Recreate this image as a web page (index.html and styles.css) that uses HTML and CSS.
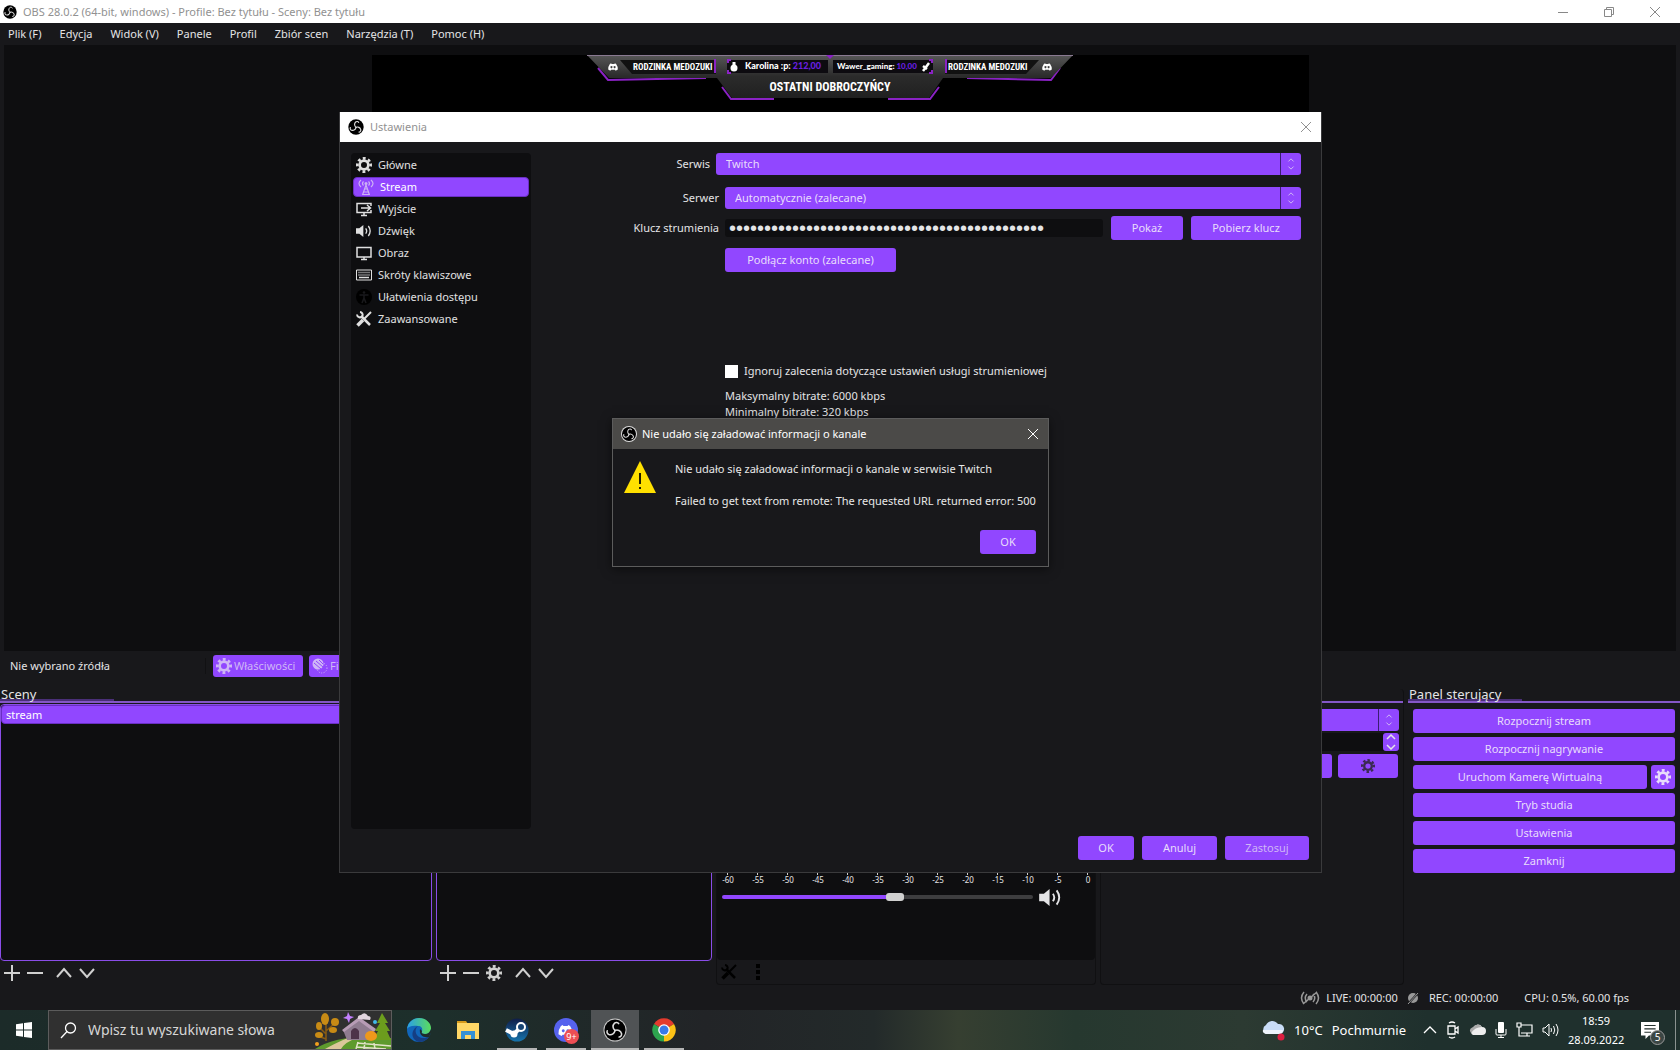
FILE: index.html
```html
<!DOCTYPE html>
<html lang="pl">
<head>
<meta charset="utf-8">
<title>OBS 28.0.2</title>
<link rel="stylesheet" href="styles.css">
</head>
<body>
<svg class="defs" aria-hidden="true">
  <symbol id="obs" viewBox="0 0 24 24">
    <circle cx="12" cy="12" r="11.5" fill="#000"/>
    <g fill="none" stroke="#ddd" stroke-width="1.7" stroke-linecap="round">
      <path d="M12 12.500C9.500 10.500 9 7 11.500 4.500c1.500-1.200 3.500-.8 4.500.5"/>
      <path d="M12 12.500C9.500 10.500 9 7 11.500 4.500c1.500-1.200 3.500-.8 4.500.5" transform="rotate(120 12 12.500)"/>
      <path d="M12 12.500C9.500 10.500 9 7 11.500 4.500c1.500-1.200 3.500-.8 4.500.5" transform="rotate(240 12 12.500)"/>
    </g>
  </symbol>
  <symbol id="gear" viewBox="0 0 24 24">
    <g fill="none" stroke="currentColor">
      <circle cx="12" cy="12" r="6.500" stroke-width="4"/>
      <circle cx="12" cy="12" r="10" stroke-width="4" stroke-dasharray="4.200 3.654" transform="rotate(-12 12 12)"/>
    </g>
  </symbol>
  <symbol id="close" viewBox="0 0 12 12"><path d="M1 1l10 10M11 1L1 11" fill="none" stroke="currentColor"/></symbol>
  <symbol id="updown" viewBox="0 0 8 14"><path d="M1 4l3-3 3 3M1 10l3 3 3-3" fill="none" stroke="currentColor"/></symbol>
  <symbol id="plus" viewBox="0 0 16 16"><path d="M8 0v16M0 8h16" stroke="currentColor" stroke-width="2"/></symbol>
  <symbol id="minus" viewBox="0 0 16 16"><path d="M0 8h16" stroke="currentColor" stroke-width="2"/></symbol>
  <symbol id="up" viewBox="0 0 16 16"><path d="M1 12l7-8 7 8" fill="none" stroke="currentColor" stroke-width="2"/></symbol>
  <symbol id="down" viewBox="0 0 16 16"><path d="M1 4l7 8 7-8" fill="none" stroke="currentColor" stroke-width="2"/></symbol>
  <symbol id="speaker" viewBox="0 0 24 18">
    <path d="M0 5h5l6-5v18l-6-5H0z" fill="currentColor"/>
    <path d="M14.500 5q3 4 0 8M18.500 1.500q5.500 7.500 0 15" fill="none" stroke="currentColor" stroke-width="2"/>
  </symbol>
  <symbol id="tools" viewBox="0 0 16 16">
    <g fill="none" stroke="currentColor">
      <path d="M5 5l9 9" stroke-width="2.500"/><path d="M1 3.500A3 3 0 0 0 6.500 5 3 3 0 0 0 4 1" stroke-width="2"/>
      <path d="M15 1L7.500 8.500" stroke-width="2"/><path d="M7 9l-5.500 5.500" stroke-width="3.500"/>
    </g>
  </symbol>
  <symbol id="discord" viewBox="0 0 16 12">
    <path fill-rule="evenodd" fill="currentColor" d="M5 0L3 1Q0 5 .3 10l3.500 2 1-1.500h6.400l1 1.500 3.500-2Q16 5 13 1l-2-1-.7 1H5.700zM5.500 4.500a1.600 1.800 0 1 0 .1 0zM10.500 4.500a1.600 1.800 0 1 0 .1 0z"/>
  </symbol>
</svg>

<div class="app">
  <header class="titlebar">
    <svg class="i14"><use href="#obs"/></svg>
    <span>OBS 28.0.2 (64-bit, windows) - Profile: Bez tytułu - Sceny: Bez tytułu</span>
    <div class="winbtns">
      <button aria-label="Minimalizuj"><svg class="i12" viewBox="0 0 12 12"><path d="M1 6.500h10" stroke="currentColor"/></svg></button>
      <button aria-label="Przywróć"><svg class="i12" viewBox="0 0 12 12"><path d="M1.500 3.500h7v7h-7zM3.500 3V1.500h7v7H9" fill="none" stroke="currentColor"/></svg></button>
      <button aria-label="Zamknij"><svg class="i12"><use href="#close"/></svg></button>
    </div>
  </header>
  <nav class="menubar">
    <button>Plik (F)</button><button>Edycja</button><button>Widok (V)</button><button>Panele</button><button>Profil</button><button>Zbiór scen</button><button>Narzędzia (T)</button><button>Pomoc (H)</button>
  </nav>

  <section class="preview">
    <div class="canvas">
      <svg class="banner" viewBox="0 0 488 50" width="488" height="50">
        <defs>
          <linearGradient id="bar" x1="0" y1="0" x2="0" y2="1"><stop offset="0" stop-color="#575757"/><stop offset=".5" stop-color="#2b2b2b"/><stop offset="1" stop-color="#202020"/></linearGradient>
        </defs>
        <path d="M11 13l10 12 98-2M473 13l-9 12-84-2" fill="none" stroke="#8a22c4" stroke-width="2"/>
        <path d="M135 32l9 12h43M352 32l-9 12h-42" fill="none" stroke="#8a22c4" stroke-width="2"/>
        <path d="M0 0h486l-22 23H356l-14 20H145l-15-20H22z" fill="url(#bar)"/>
        <path d="M0 0h486" stroke="#8a7a92" stroke-width="2"/>
        <path d="M33 5h96v14H45zM358 5h94l-13 14h-81z" fill="#111"/>
        <path d="M140 5h101v13H140zM246 5h100v13H246z" fill="#0d0b10"/>
        <path d="M128 4v14M359 4v14M141 8V5h3M141 15v3h3M345 8V5h-3M345 15v3h-3" stroke="#8a22c4" stroke-width="2" fill="none"/>
        <path d="M239 0h8l-4 4z" fill="#8a22c4"/>
        <circle cx="147" cy="13" r="3.500" fill="#fff"/><path d="M145.500 7h3v4h-3z" fill="#fff"/>
        <path d="M336 16l6-8M336 11l4 3" stroke="#fff" stroke-width="2.500"/>
        <use href="#discord" x="21" y="8" width="10" height="8" color="#fff"/>
        <use href="#discord" x="455" y="8" width="10" height="8" color="#fff"/>
        <g class="cond"><text x="46" y="15">RODZINKA MEDOZUKI</text><text x="361" y="15">RODZINKA MEDOZUKI</text></g>
        <text class="cond big" x="243" y="36" text-anchor="middle">OSTATNI DOBROCZYŃCY</text>
        <text class="donor" x="158" y="14">Karolina :p: <tspan fill="#6a1fe0">212,00</tspan></text>
        <text class="donor small" x="250" y="14">Wawer_gaming: <tspan fill="#6a1fe0">10,00</tspan></text>
      </svg>
    </div>
  </section>

  <section class="sourcebar">
    <span class="nosource">Nie wybrano źródła</span>
    <button class="btn dim"><svg class="i16"><use href="#gear"/></svg>Właściwości</button>
    <button class="btn dim"><svg class="i16" viewBox="0 0 16 16"><circle cx="10" cy="10" r="5" fill="none" stroke="currentColor" stroke-dasharray="1 1.500"/><circle cx="6" cy="6" r="5.500" fill="currentColor"/><path d="M2 5l7 6M4 3l7 6M7 2l4 4" stroke="#9147ff"/></svg>Filtry</button>
  </section>

  <main class="docks">
    <section class="dock">
      <h2>Sceny</h2>
      <ul class="list"><li>stream</li></ul>
      <div class="tools">
        <button aria-label="Dodaj"><svg class="i16"><use href="#plus"/></svg></button>
        <button aria-label="Usuń"><svg class="i16"><use href="#minus"/></svg></button>
        <button aria-label="W górę" class="sep"><svg class="i16"><use href="#up"/></svg></button>
        <button aria-label="W dół"><svg class="i16"><use href="#down"/></svg></button>
      </div>
    </section>
    <section class="dock">
      <h2></h2>
      <ul class="list"></ul>
      <div class="tools">
        <button aria-label="Dodaj"><svg class="i16"><use href="#plus"/></svg></button>
        <button aria-label="Usuń"><svg class="i16"><use href="#minus"/></svg></button>
        <button aria-label="Właściwości"><svg class="i16"><use href="#gear"/></svg></button>
        <button aria-label="W górę" class="sep"><svg class="i16"><use href="#up"/></svg></button>
        <button aria-label="W dół"><svg class="i16"><use href="#down"/></svg></button>
      </div>
    </section>
    <section class="dock framed">
      <h2></h2>
      <div class="mixer">
        <div class="meter"></div>
        <div class="scale"><span>-60</span><span>-55</span><span>-50</span><span>-45</span><span>-40</span><span>-35</span><span>-30</span><span>-25</span><span>-20</span><span>-15</span><span>-10</span><span>-5</span><span>0</span></div>
        <div class="volume"><input type="range" min="0" max="100" value="56" aria-label="Głośność"><button aria-label="Wycisz"><svg width="23" height="17"><use href="#speaker"/></svg></button></div>
      </div>
      <div class="tools dark">
        <button aria-label="Zaawansowane"><svg class="i16"><use href="#tools"/></svg></button>
        <button aria-label="Menu" class="sep"><svg class="i16" viewBox="0 0 16 16"><path d="M8 0v4M8 6v4M8 12v4" stroke="currentColor" stroke-width="4"/></svg></button>
      </div>
    </section>
    <section class="dock framed">
      <h2></h2>
      <div class="transitions">
        <div class="select"><select aria-label="Przejście"><option></option></select><svg><use href="#updown"/></svg></div>
        <div class="spin"><input aria-label="Czas trwania"><button aria-label="Zmień"><svg width="10" height="16" viewBox="0 0 10 16"><path d="M1 5l4-4 4 4M1 11l4 4 4-4" fill="none" stroke="currentColor" stroke-width="1.500"/></svg></button></div>
        <div class="pair"><button class="btn" aria-label="Dodaj przejście"></button><button class="btn ink" aria-label="Ustawienia przejścia"><svg class="i14"><use href="#gear"/></svg></button></div>
      </div>
    </section>
    <section class="dock">
      <h2>Panel sterujący</h2>
      <div class="controls">
        <button class="btn">Rozpocznij stream</button>
        <button class="btn">Rozpocznij nagrywanie</button>
        <div class="cam"><button class="btn">Uruchom Kamerę Wirtualną</button><button class="btn" aria-label="Konfiguracja kamery"><svg class="i16"><use href="#gear"/></svg></button></div>
        <button class="btn">Tryb studia</button>
        <button class="btn">Ustawienia</button>
        <button class="btn">Zamknij</button>
      </div>
    </section>
  </main>

  <footer class="status">
    <span class="live"><svg width="20" height="14" viewBox="0 0 20 14"><g fill="none" stroke="currentColor" stroke-width="1.500"><path d="M4 1Q-1 7 4 13M16 1q5 6 0 12M7 3Q3.500 7 7 11M13 3q3.500 4 0 8M3 13L17 1"/></g><circle cx="10" cy="7" r="2.500" fill="currentColor"/></svg>LIVE: 00:00:00</span>
    <span class="rec"><svg width="12" height="14" viewBox="0 0 12 14"><circle cx="6" cy="7" r="5" fill="currentColor"/><path d="M0 14L12 1" stroke="#18181b" stroke-width="2"/><path d="M1 13L11 2" stroke="currentColor"/></svg>REC: 00:00:00</span>
    <span class="cpu">CPU: 0.5%, 60.00 fps</span>
  </footer>
</div>

<div class="taskbar">
  <button class="start" aria-label="Start"><svg class="i16" viewBox="0 0 16 16"><path d="M0 2.300l7-1V7.500H0zM8 1.100L16 0v7.500H8zM0 8.500h7v6.200l-7-1zM8 8.500h8V16l-8-1.100z" fill="#fff"/></svg></button>
  <label class="search">
    <svg width="17" height="17" viewBox="0 0 17 17"><circle cx="10.500" cy="6" r="5" fill="none" stroke="#fff" stroke-width="1.300"/><path d="M7 9.500L1 16" stroke="#fff" stroke-width="1.300"/></svg>
    <input type="text" placeholder="Wpisz tu wyszukiwane słowa">
    <svg class="scene" width="76" height="38" viewBox="0 0 76 38">
      <path d="M0 38Q25 22 76 27V38z" fill="#5e9a2d"/><path d="M10 38q22-12 28-12l4 1q-12 4-16 11z" fill="#dcc79a"/>
      <path d="M28 19l17-12 13 12v10H32z" fill="#8f7c90"/><path d="M27 19L44 6l17 12-2 3L44 10 29 21z" fill="#b79cb5"/><path d="M36 28v-8q4-6 8 0v8z" fill="#4d3349"/>
      <path d="M11 30V10M11 23l-7-7M11 20l9-8M11 28l-8-3" stroke="#8a5c12" stroke-width="1.500"/>
      <g fill="#c88b15"><ellipse cx="10" cy="8" rx="4" ry="6"/><ellipse cx="4" cy="15" rx="3" ry="4"/><ellipse cx="20" cy="11" rx="4" ry="4"/><ellipse cx="4" cy="24" rx="4" ry="3"/><ellipse cx="18" cy="19" rx="4" ry="3"/></g>
      <path d="M67 2l6 10h-3l5 8h-3l4 9H58l5-9h-3l5-8h-3z" fill="#6c9c1d"/>
      <ellipse cx="56" cy="25" rx="6" ry="5" fill="#ed981b"/><path d="M33 1l2 4 4 1-4 2-1 4-2-4-4-1 4-2z" fill="#c480ff"/>
      <path d="M43 8q-1-4 3-4 4-4 7 1 4 0 2 4z" fill="#e2d5de"/><circle cx="60" cy="11" r="2" fill="#41b9e8"/><circle cx="2" cy="33" r="2" fill="#f2a01e"/>
      <path d="M41 38l2-7M49 38l1-7M60 38l-1-6M42 32l34 3M41 36l30 2" stroke="#e2e2c8" stroke-width="1.500"/>
    </svg>
  </label>
  <div class="apps">
    <button aria-label="Edge"><svg class="i24" viewBox="0 0 24 24"><defs><linearGradient id="eg" x1="0" x2="1"><stop offset="0" stop-color="#2a9fe8"/><stop offset="1" stop-color="#5bdc5c"/></linearGradient></defs><circle cx="12" cy="12" r="12" fill="#1166ba"/><path d="M0 11C1 4 6 0 12 0c7 0 12 5 12 10 0 4-3 6-6 6-3 0-4-1-3-3 1-3-1-5-4-5-6-1-10 1-11 3z" fill="url(#eg)"/><path d="M11 8c-5 4-2 13 7 12l4-1c-3 4-7 5-10 5C4 22 3 12 11 8z" fill="#153e83"/><path d="M15 13c-1 2 0 3 3 3 3 0 5-2 6-5v4l-2 4c-6 1-10-2-9-8z" fill="#1f2c2a"/></svg></button>
    <button aria-label="Eksplorator"><svg class="i24" viewBox="0 0 24 24"><path d="M1 3h9l2 3h-11z" fill="#d69a1b"/><path d="M1 5h22v16H1z" fill="#ffd766"/><path d="M5 21v-8h14v8h-4v-4H9v4z" fill="#3490d5"/></svg></button>
    <button class="open" aria-label="Steam"><svg class="i24" viewBox="0 0 24 24"><defs><linearGradient id="st" x1="0" y1="0" x2="0" y2="1"><stop offset="0" stop-color="#101d48"/><stop offset="1" stop-color="#1674ac"/></linearGradient></defs><circle cx="12" cy="12" r="11.500" fill="url(#st)"/><path d="M1 12l8 4 7-7" fill="none" stroke="#fff" stroke-width="4"/><circle cx="9" cy="16" r="3.500" fill="#fff"/><circle cx="16" cy="9" r="4" fill="#174474" stroke="#fff" stroke-width="2"/></svg></button>
    <button class="open" aria-label="Discord"><svg class="i24" viewBox="0 0 24 24"><circle cx="12" cy="12" r="12" fill="#5662ee"/><use href="#discord" x="4" y="7" width="15" height="11" color="#fff"/></svg><span class="badge">9+</span></button>
    <button class="open current" aria-label="OBS"><svg class="i24" viewBox="0 0 24 24"><circle cx="12" cy="12" r="11.500" fill="#c8c8c8"/><use href="#obs" x="1" y="1" width="22" height="22"/></svg></button>
    <button class="open" aria-label="Chrome"><svg class="i24" viewBox="0 0 24 24"><path d="M12 12L2 6A11.500 11.500 0 0 1 22 6z" fill="#e33b2e"/><path d="M12 12L22 6A11.500 11.500 0 0 1 12 23.500z" fill="#fbc116"/><path d="M12 12v11.500A11.500 11.500 0 0 1 2 6z" fill="#2da44e"/><circle cx="12" cy="12" r="5.800" fill="#fff"/><circle cx="12" cy="12" r="4.500" fill="#3979e8"/></svg></button>
  </div>
  <div class="weather">
    <svg width="24" height="22" viewBox="0 0 24 22"><path d="M5 15a5 5 0 0 1 0-9 7 7 0 0 1 12-1 5 5 0 0 1 2 10z" fill="#c9ddf8"/><path d="M5 15q-4-1-3-4h20q0 4-4 4z" fill="#eef3fb"/><circle cx="20" cy="18" r="3.500" fill="#dd1e40"/></svg>
    <span>10°C</span><span>Pochmurnie</span>
  </div>
  <div class="tray">
    <svg width="14" height="18" viewBox="0 0 14 18"><path d="M1 12l6-6 6 6" fill="none" stroke="#fff" stroke-width="1.300"/></svg>
    <svg width="14" height="18" viewBox="0 0 14 18"><path d="M2 5h7v8H2zM9 8l3-2v6l-3-2M3 2q3-2 6 0M3 16q3 2 6 0" fill="none" stroke="#fff" stroke-width="1.300"/></svg>
    <svg width="17" height="18" viewBox="0 0 17 18"><path d="M4 14a4 4 0 0 1 0-7 5 5 0 0 1 9-1 4 4 0 0 1 0 8z" fill="#eee"/><path d="M2 12q4-6 11-6-4-5-9 0-5 2-2 6z" fill="#aaa"/></svg>
    <svg width="12" height="18" viewBox="0 0 12 18"><rect x="3" y="1" width="6" height="11" rx="1" fill="#fff"/><path d="M1 8v5q0 1 1 1h8q1 0 1-1V8M6 14v3M3 16.500h6" fill="none" stroke="#fff"/></svg>
    <svg width="17" height="18" viewBox="0 0 17 18"><path d="M5 4h11v8H5M3 6v9h6M1 2h4v4H1zM11 12v3M8 15h6" fill="none" stroke="#fff" stroke-width="1.200"/></svg>
    <svg width="17" height="18" viewBox="0 0 17 18"><path d="M1 7h2l4-4v12l-4-4H1zM9 7q1 2 0 4M11.500 5q2.500 4 0 8M14 3q4 6 0 12" fill="none" stroke="#fff"/></svg>
  </div>
  <div class="clock"><span>18:59</span><span>28.09.2022</span></div>
  <button class="notif" aria-label="Powiadomienia"><svg width="18" height="17" viewBox="0 0 16 15"><path d="M0 0h16v12H7l-3 3v-3H0z" fill="#fff"/><path d="M3 3h10M3 6h10M3 9h6" stroke="#24312e"/></svg><span class="badge count">5</span></button>
</div>

<section class="dialog">
  <header class="dlg-title"><svg class="i16"><use href="#obs"/></svg><span>Ustawienia</span><button aria-label="Zamknij"><svg class="i12"><use href="#close"/></svg></button></header>
  <div class="dlg-body">
    <ul class="side">
      <li><svg class="i16"><use href="#gear"/></svg>Główne</li>
      <li class="active"><svg class="i16" viewBox="0 0 16 16"><path d="M3 1Q-1 4.500 3 8M13 1q4 3.500 0 7M5.500 2.500q-2 2 0 4M10.500 2.500q2 2 0 4M8 6L4.500 16M8 6l3.500 10M6 13h4M6 10h4M4 15.500h8" fill="none" stroke="currentColor" stroke-width="1.200"/><circle cx="8" cy="4.500" r="1.500" fill="currentColor"/></svg>Stream</li>
      <li><svg class="i16" viewBox="0 0 16 16"><path d="M15 5V2.500H1v9h14V9M5 7h9M11 4l3.500 3L11 10M5 14.500h6M8 11v3" fill="none" stroke="currentColor" stroke-width="1.500"/></svg>Wyjście</li>
      <li><svg width="16" height="12"><use href="#speaker"/></svg>Dźwięk</li>
      <li><svg class="i16" viewBox="0 0 16 16"><path d="M1 2.500h14v9.500H1zM5 14.500h6M8 12v2" fill="none" stroke="currentColor" stroke-width="1.500"/></svg>Obraz</li>
      <li><svg class="i16" viewBox="0 0 16 16"><path d="M.5 3h15v10H.5z" fill="none" stroke="currentColor"/><path d="M2.500 5.500h11M2.500 8h11" stroke="currentColor" stroke-width="1.500" stroke-dasharray="1 1"/><path d="M3 10.500h10" stroke="currentColor" stroke-width="1.500"/></svg>Skróty klawiszowe</li>
      <li><svg class="i16" viewBox="0 0 16 16"><circle cx="8" cy="8" r="8" fill="#000"/><path d="M3.500 6h9M8 6v3l-2 5M8 9l2 5" fill="none" stroke="#19191c" stroke-width="1.500"/><circle cx="8" cy="3.500" r="1.300" fill="#19191c"/></svg>Ułatwienia dostępu</li>
      <li><svg class="i16"><use href="#tools"/></svg>Zaawansowane</li>
    </ul>
    <form class="form">
      <div class="row outer"><label for="service">Serwis</label><div class="select"><select id="service"><option>Twitch</option></select><svg><use href="#updown"/></svg></div></div>
      <div class="row"><label for="server">Serwer</label><div class="select"><select id="server"><option>Automatycznie (zalecane)</option></select><svg><use href="#updown"/></svg></div></div>
      <div class="row key"><label for="key">Klucz strumienia</label><div class="keyline"><input id="key" type="password" value="000000000000000000000000000000000000000000000"><button type="button" class="btn show">Pokaż</button><button type="button" class="btn get">Pobierz klucz</button></div></div>
      <div class="row"><span></span><button type="button" class="btn connect">Podłącz konto (zalecane)</button></div>
      <div class="row ignore"><span></span><label class="check"><input type="checkbox">Ignoruj zalecenia dotyczące ustawień usługi strumieniowej</label></div>
      <div class="row"><span></span><p>Maksymalny bitrate: 6000 kbps<br>Minimalny bitrate: 320 kbps</p></div>
    </form>
  </div>
  <footer class="dlg-foot"><button class="btn ok">OK</button><button class="btn cancel">Anuluj</button><button class="btn apply dim">Zastosuj</button></footer>

  <div class="overlay">
    <section class="msg" role="alertdialog">
      <header class="msg-title"><svg class="i16" viewBox="0 0 24 24"><circle cx="12" cy="12" r="12" fill="#ddd"/><use href="#obs" x="1" y="1" width="22" height="22"/></svg><span>Nie udało się załadować informacji o kanale</span><button aria-label="Zamknij"><svg class="i12"><use href="#close"/></svg></button></header>
      <div class="msg-body">
        <svg width="32" height="32" viewBox="0 0 32 32"><path d="M16 0l16 32H0z" fill="#ffe000"/><path d="M16 12v11M16 26v2" stroke="#201c00" stroke-width="2"/></svg>
        <p>Nie udało się załadować informacji o kanale w serwisie Twitch<br><br>Failed to get text from remote: The requested URL returned error: 500</p>
      </div>
      <footer class="msg-foot"><button class="btn ok">OK</button></footer>
    </section>
  </div>
</section>
</body>
</html>
```

FILE: styles.css
```css
:root { --bg: #18181b; --deep: #0e0e10; --accent: #9147ff; --text: #e4e4e6; }
* { box-sizing: border-box; }
body { margin: 0; height: 100vh; display: flex; flex-direction: column; position: relative; overflow: hidden; background: var(--bg); color: var(--text); font: 11px/16px "Noto Sans", "Open Sans", sans-serif; }
button, input, select { font: inherit; color: inherit; }
button { background: none; border: 0; padding: 0; display: flex; align-items: center; justify-content: center; white-space: nowrap; }
h2, p, ul { margin: 0; padding: 0; list-style: none; font-weight: 400; }
svg { display: block; flex: none; }
.defs { position: absolute; width: 0; height: 0; }
.i12 { width: 12px; height: 12px; }
.i14 { width: 14px; height: 14px; }
.i16 { width: 16px; height: 16px; }
.i24 { width: 24px; height: 24px; }
.btn { height: 24px; border-radius: 3px; background: var(--accent); color: #e8dcfb; gap: 3px; }
.btn.dim { color: #cfb6f6; }

.app { flex: 1; min-height: 0; display: flex; flex-direction: column; }
.titlebar { height: 23px; background: #fff; color: #919191; display: flex; align-items: center; gap: 6px; padding-left: 3px; }
.winbtns { margin-left: auto; display: flex; padding-right: 19px; gap: 34px; color: #888; }
.menubar { height: 22px; display: flex; align-items: center; gap: 18px; padding-left: 8px; }

.preview { flex: 1; min-height: 0; margin: 0 4px; background: var(--deep); padding: 10px 367px 0 368px; }
.canvas { height: 100%; background: #000; padding-left: 215px; }
.cond { font: bold 9px "Roboto Condensed", "Roboto", sans-serif; fill: #fff; }
.big { font-size: 12px; }
.donor { font: 900 9px "Lato", sans-serif; fill: #fff; }
.small { font-size: 8px; }

.sourcebar { height: 38px; display: flex; align-items: center; padding: 0 0 8px 10px; gap: 6px; }
.nosource { width: 196px; margin-right: 1px; border-right: 1px solid #111113; }
.sourcebar .btn { height: 22px; width: 90px; justify-content: flex-start; padding-left: 3px; gap: 2px; }

.docks { height: 296px; display: grid; grid-template-columns: 432fr 276fr 380fr 304fr 272fr; gap: 4px; }
.dock { display: flex; flex-direction: column; min-width: 0; }
.dock h2 { height: 14px; font-size: 13px; line-height: 11px; border-bottom: 2px solid #8457c6; padding-left: 1px; background: linear-gradient(#4a2f78, #4a2f78) left bottom / 114px 2px no-repeat; }
.list { flex: 1; margin-top: 1px; border: 1px solid #8a4de8; border-radius: 4px; background: var(--deep); }
.list li { height: 19px; line-height: 18px; padding-left: 4px; background: var(--accent); border: 1px solid #6a2fc4; border-radius: 4px; color: #fff; }
.tools { height: 24px; display: flex; align-items: center; gap: 7px; padding-left: 4px; color: #d0d0d0; }
.sep { margin-left: 6px; }
.dark { color: #000; }
.framed { border: solid #101012; border-width: 0 1px 1px; border-radius: 4px; }
.mixer { flex: 1; background: var(--deep); border-radius: 4px; padding: 168px 5px 0 5px; }
.meter { height: 4px; background: repeating-linear-gradient(90deg, #ccc 0 1px, transparent 1px 30px); margin: 0 0 0 5px; }
.scale { display: flex; font-size: 8px; line-height: 10px; margin-left: -9px; }
.scale span { width: 30px; flex: none; text-align: center; }
.volume { display: flex; align-items: center; gap: 6px; height: 24px; }
.volume input { appearance: none; width: 311px; height: 4px; margin: 0; border-radius: 2px; background: linear-gradient(90deg, var(--accent) 53%, #3d3d3f 53%); }
.volume input::-webkit-slider-thumb { appearance: none; width: 18px; height: 8px; border-radius: 3px; background: #d0d0d0; }
.transitions { padding: 6px 4px; display: flex; flex-direction: column; gap: 2px; }
.select { position: relative; height: 22px; border-radius: 3px; background: linear-gradient(90deg, transparent calc(100% - 21px), #3b1e72 calc(100% - 21px) calc(100% - 20px), transparent calc(100% - 20px)), var(--accent); }
.select select { appearance: none; width: 100%; height: 22px; border: 0; padding: 0 30px 0 10px; background: none; color: #e8dcfb; }
.select svg { position: absolute; right: 6px; top: 5px; width: 8px; height: 12px; color: #d9c8f5; }
.spin { height: 18px; display: flex; background: var(--deep); }
.spin input { flex: 1; min-width: 0; border: 0; background: none; }
.spin button { width: 16px; border-radius: 3px; background: var(--accent); }
.pair { display: grid; grid-template-columns: 1fr 60px; gap: 6px; padding: 1px 1px 0 0; }
.btn.ink { color: #3a2a52; }
.controls { padding: 6px 5px; display: flex; flex-direction: column; gap: 4px; }
.cam { display: grid; grid-template-columns: 1fr 24px; gap: 4px; }

.status { height: 25px; display: flex; justify-content: flex-end; align-items: center; padding-right: 51px; }
.status span { display: flex; align-items: center; }
.status svg { color: #999; }
.live { gap: 6px; margin-right: 9px; }
.rec { gap: 10px; margin-right: 26px; }

.taskbar { height: 40px; display: flex; color: #fff; background: linear-gradient(90deg, #1c2b29 0, #1d2f2b 26%, #222427 42%, #232a2a 52%, #363f31 57%, #26382f 64%, #2c3a32 74%, #1f302d 85%, #1f302d 100%); }
.start { width: 48px; }
.search { width: 344px; display: flex; align-items: center; gap: 11px; padding-left: 11px; border: 1px solid #5c5c5c; background: #303030; }
.search input { flex: 1; min-width: 0; border: 0; padding: 0; background: none; font-size: 14px; }
.search input::placeholder { color: #d6d6d6; opacity: 1; }
.apps { display: flex; padding-left: 3px; gap: 1px; }
.apps button { width: 48px; position: relative; }
.open::after { content: ""; position: absolute; left: 4px; right: 4px; bottom: 0; height: 2px; background: #b5b5b5; }
.current { background: #505355; }
.current::after { left: 0; right: 0; }
.badge { position: absolute; right: 11px; bottom: 6px; width: 15px; height: 15px; border-radius: 8px; background: #ed4e54; font-size: 9px; line-height: 15px; text-align: center; }
.weather { margin-left: auto; display: flex; align-items: center; gap: 9px; font-size: 13px; padding-right: 17px; }
.tray { display: flex; align-items: center; gap: 9px; padding-right: 9px; }
.clock { display: flex; flex-direction: column; justify-content: center; text-align: center; line-height: 19px; width: 56px; }
.notif { width: 52px; margin-right: 4px; border-right: 1px solid #8a9290; position: relative; }
.notif .count { right: 10px; bottom: 5px; background: #3c4644; border: 1px solid #999; font-size: 10px; line-height: 13px; }

.dialog { position: absolute; left: 339px; right: 358px; top: 112px; bottom: 177px; display: flex; flex-direction: column; background: var(--bg); border: solid #3a3a3c; border-width: 0 1px 1px; }
.dlg-title { height: 30px; display: flex; align-items: center; gap: 6px; padding: 0 9px 0 8px; background: #fff; color: #919191; }
.dlg-title button, .msg-title button { margin-left: auto; }
.dlg-body { flex: 1; min-height: 0; display: flex; padding: 11px 20px 0 11px; }
.side { width: 180px; flex: none; padding: 1px 2px; background: var(--deep); border-radius: 4px; }
.side li { height: 22px; display: flex; align-items: center; gap: 6px; padding: 0 3px; color: #e0e0e0; }
.side .active { height: 20px; margin: 1px 0; padding: 0 4px; border: 1px solid #6a2fc4; border-radius: 4px; background: var(--accent); color: #fff; }
.side .active svg { color: #cdb2f5; }
.form { flex: 1; min-width: 0; }
.row { display: grid; grid-template-columns: 188px 1fr; gap: 6px; align-items: center; margin-bottom: 7px; }
.row > label:first-child { text-align: right; }
.outer { grid-template-columns: 179px 1fr; margin-bottom: 12px; }
.key { margin-bottom: 8px; }
.keyline { display: flex; align-items: center; gap: 8px; }
.keyline input { flex: 1; min-width: 0; height: 18px; border: 0; border-radius: 3px; padding: 0 4px; background: var(--deep); font-family: "Liberation Sans", sans-serif; font-size: 20px; line-height: 18px; }
.show { width: 72px; }
.get { width: 110px; }
.connect { width: 171px; }
.ignore { margin: 91px 0 9px; }
.check { display: flex; align-items: center; gap: 6px; }
.check input { appearance: none; width: 13px; height: 13px; margin: 0; background: #fff; }
.dlg-foot { height: 43px; display: flex; justify-content: flex-end; align-items: flex-start; gap: 8px; padding: 7px 12px 0 0; }
.ok { width: 56px; }
.cancel { width: 75px; }
.apply { width: 84px; }

.overlay { position: absolute; inset: 0; display: grid; place-items: center; }
.msg { width: 437px; border: 1px solid #5c5c5c; background: var(--bg); box-shadow: 0 2px 10px #0008; color: #e8e8e8; }
.msg-title { height: 30px; display: flex; align-items: center; gap: 5px; padding: 0 9px 0 8px; background: #4b4a48; color: #fff; }
.msg-body { display: flex; align-items: flex-start; gap: 19px; padding: 12px 0 0 11px; white-space: nowrap; }
.msg-foot { display: flex; justify-content: flex-end; padding: 21px 12px 12px; }
```
